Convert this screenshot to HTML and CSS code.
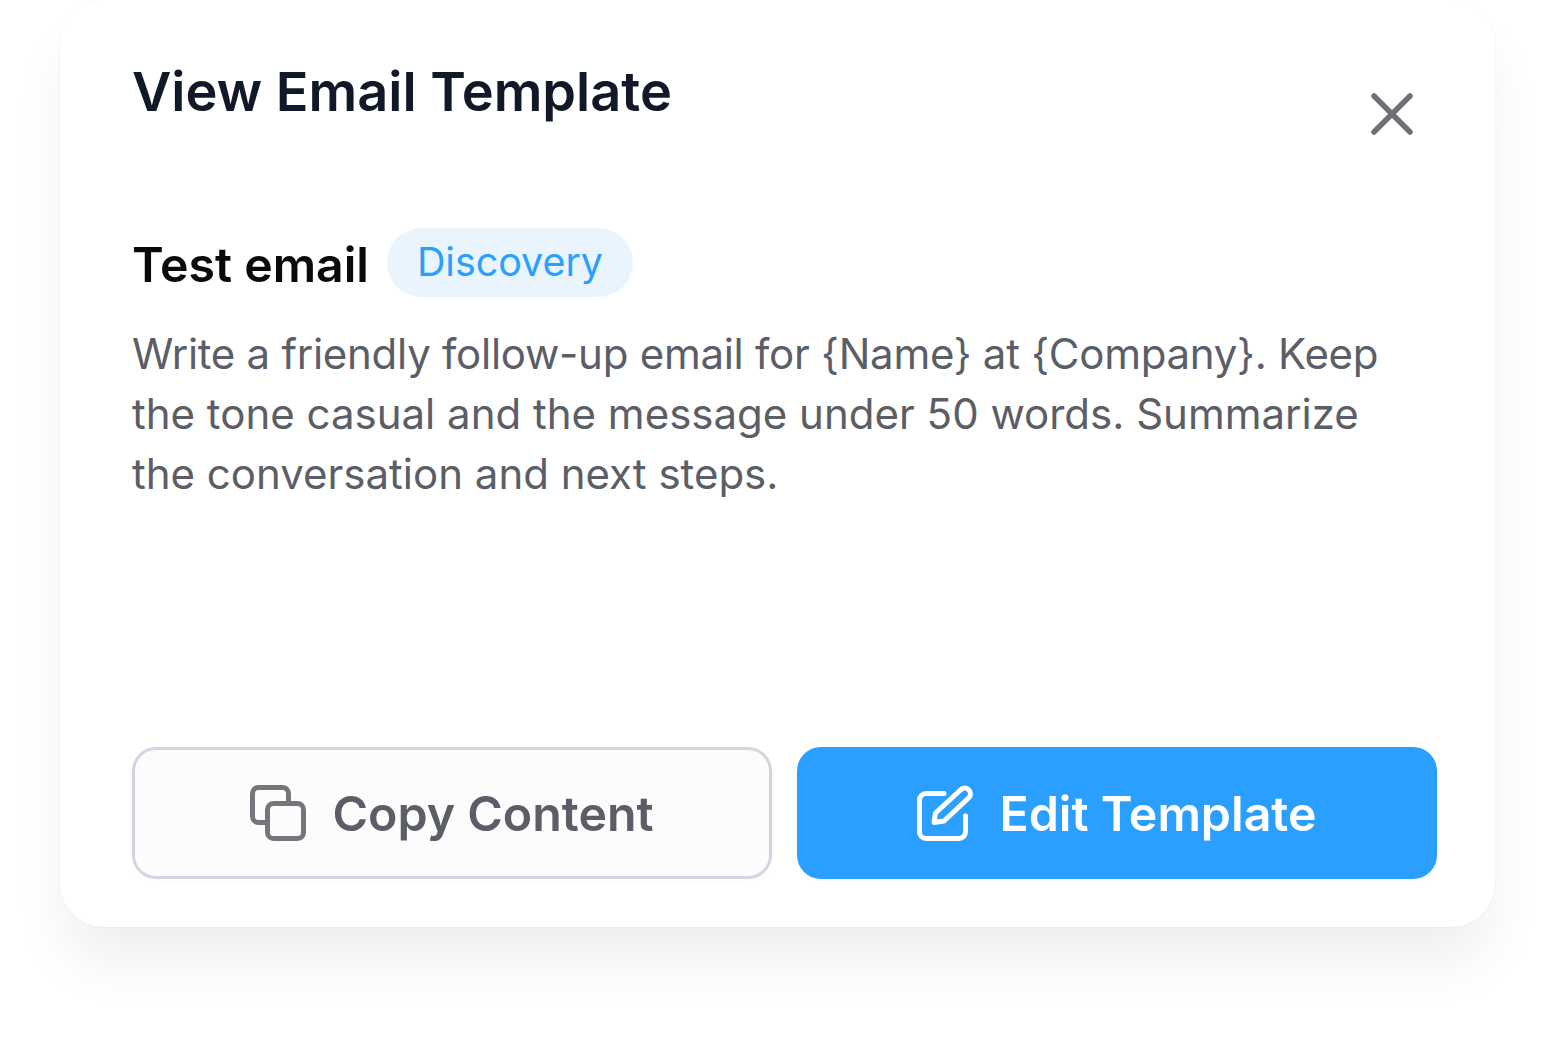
FILE: index.html
```html
<!DOCTYPE html>
<html lang="en">
<head>
  <meta charset="UTF-8">
  <title>View Email Template</title>
  <link rel="stylesheet" href="styles.css">
</head>
<body>
  <div class="modal">
    <div class="modal-head">
      <h1>View Email Template</h1>
      <button class="close">
        <svg width="42" height="42" viewBox="0 0 42 42" fill="none" stroke="#6f7077" stroke-width="5.5" stroke-linecap="round"><path d="M3 3 39 39M39 3 3 39"/></svg>
      </button>
    </div>
    <div class="title-row">
      <h2>Test email</h2>
      <span class="badge">Discovery</span>
    </div>
    <p class="body-text"><span class="first-line">Write a friendly follow-up email for {Name} at {Company}. Keep</span> the tone casual and the message under 50 words. Summarize the conversation and next steps.</p>
    <div class="actions">
      <button class="btn btn-copy">
        <svg width="56" height="56" viewBox="0 0 56 56" fill="none" stroke="#75767c" stroke-width="5" stroke-linejoin="round" stroke-linecap="round"><path d="M15 37.500H8.500a6 6 0 0 1-6-6V8.500a6 6 0 0 1 6-6h24a6 6 0 0 1 6 6V16"/><rect x="17.500" y="18.500" width="36" height="35" rx="6"/></svg>
        Copy Content
      </button>
      <button class="btn btn-edit">
        <svg width="56" height="56" viewBox="0 0 56 56" fill="none" stroke="#fff" stroke-width="5" stroke-linejoin="round" stroke-linecap="round"><path d="M27 8.500H9a6.500 6.500 0 0 0-6.500 6.500v32A6.500 6.500 0 0 0 9 53.500h33a6.500 6.500 0 0 0 6.500-6.500V31"/><path d="M43.500 5a5.500 5.500 0 0 1 8.500 7.500L27 36l-10 1.500 1.500-9.500z"/></svg>
        Edit Template
      </button>
    </div>
  </div>
</body>
</html>
```

FILE: styles.css
```css
html, body {
  margin: 0;
  height: 1047px;
  overflow: hidden;
  background: #fff;
}
body {
  font-family: Inter, "Liberation Sans", sans-serif;
}
.modal {
  box-sizing: border-box;
  width: 1435px;
  height: 927px;
  margin-left: 60px;
  padding: 60px 58px 48px 73px;
  background: #fff;
  border-radius: 44px;
  box-shadow: 0 0 3px rgba(17, 24, 39, 0.05), 0 40px 60px -10px rgba(17, 24, 39, 0.08);
  display: flex;
  flex-direction: column;
}
.modal-head {
  display: flex;
  justify-content: space-between;
  align-items: flex-start;
  padding-right: 24px;
}
h1 {
  margin: 0 0 0 -1px;
  font-size: 54.100px;
  line-height: 64px;
  font-weight: 600;
  color: #111827;
}
.close {
  border: 0;
  background: none;
  padding: 0;
  margin-top: 33px;
  height: 42px;
}
.title-row {
  display: flex;
  align-items: center;
  gap: 18px;
  margin-top: 93px;
  margin-left: -1px;
}
h2 {
  margin: 0;
  padding-top: 4px;
  font-size: 48.200px;
  line-height: 60px;
  font-weight: 600;
  color: #0a0a0a;
}
.badge {
  padding: 0 30px;
  height: 69px;
  line-height: 69px;
  border-radius: 35px;
  background: #e9f4fd;
  color: #2b9fff;
  font-size: 39.400px;
}
.body-text {
  margin: 27px 0 0 -1px;
  max-width: 1260px;
  font-size: 42px;
  line-height: 60px;
  color: #5b5e66;
}
.first-line {
  letter-spacing: -0.27px;
}
.actions {
  margin-top: auto;
  margin-left: -1px;
  display: grid;
  grid-template-columns: 1fr 1fr;
  gap: 25px;
}
.btn {
  box-sizing: border-box;
  height: 132px;
  padding: 0;
  border-radius: 24px;
  display: flex;
  align-items: center;
  justify-content: center;
  gap: 26px;
  font-family: inherit;
  font-size: 48.300px;
  font-weight: 600;
}
.btn-copy {
  background: #fcfcfd;
  border: 3px solid #d2d6e0;
  color: #5b5e66;
  box-shadow: 0 2px 6px rgba(17, 24, 39, 0.02);
}
.btn-edit {
  background: #2b9fff;
  border: 0;
  color: #fff;
  box-shadow: 0 2px 6px rgba(17, 24, 39, 0.02);
}
```
